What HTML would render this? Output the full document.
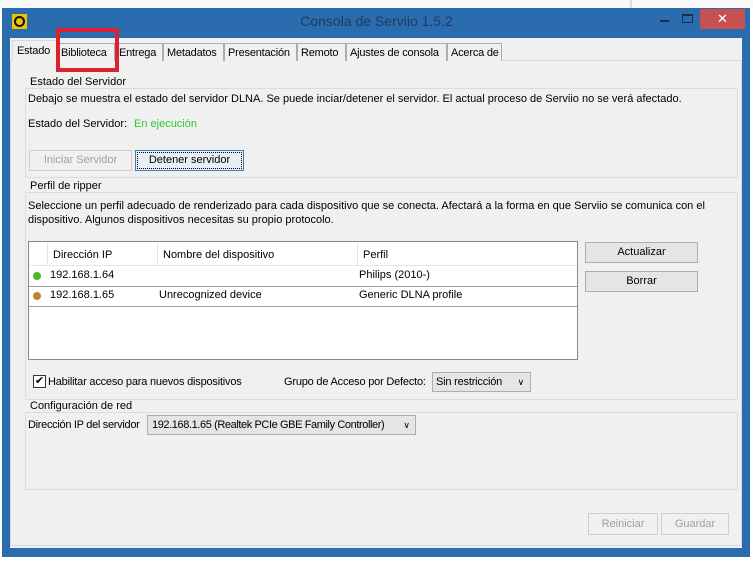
<!DOCTYPE html>
<html><head><meta charset="utf-8"><style>
*{margin:0;padding:0;box-sizing:border-box}
body{width:753px;height:561px;background:#fff;position:relative;overflow:hidden;font-family:"Liberation Sans",sans-serif;font-size:11px;color:#000}
.a{position:absolute;white-space:nowrap}
.frame{position:absolute;left:2px;top:8px;width:748px;height:549px;background:#2b6cae}
.tab{position:absolute;top:43px;height:18px;background:#f0f0f0;border:1px solid #adadad;border-bottom:none;padding:3px 0 0 3px;font-size:11px;white-space:nowrap;overflow:hidden;letter-spacing:-0.2px}
.grp{position:absolute;border:1px solid #dcdcdc;border-radius:2px}
.lbl{position:absolute;background:#f0f0f0;padding:0 2px;font-size:11px;white-space:nowrap}
.btn{position:absolute;border:1px solid #adadad;background:#e5e5e5;text-align:center;font-size:11px;line-height:19px;white-space:nowrap}
.dis{color:#a0a0a0;background:#f0f0f0;border-color:#cfcfcf}
</style></head><body>
<div class="a" style="left:0;top:0;width:753px;height:8px;background:#fafafa"></div>
<div class="a" style="left:630px;top:0;width:2px;height:8px;background:#ddd"></div>
<div class="frame"></div>
<div class="a" style="left:12px;top:14px;width:15px;height:15px;background:#f2c200"></div>
<div class="a" style="left:14px;top:16px;width:11px;height:11px;border:2.5px solid #111;border-radius:50%"></div>
<div class="a" style="left:0;width:753px;top:13px;text-align:center;font-size:14px;color:#1c3b66">Consola de Serviio 1.5.2</div>
<div class="a" style="left:660px;top:20px;width:9px;height:2px;background:#1c2c44"></div>
<div class="a" style="left:682px;top:14px;width:11px;height:9px;border:1px solid #1c2c44;border-top-width:2px"></div>
<div class="a" style="left:700px;top:9px;width:45px;height:20px;background:#c75050;color:#fff;text-align:center;font-size:13px;line-height:19px">✕</div>
<div class="a" style="left:10px;top:38px;width:732px;height:510px;background:#f0f0f0"></div>
<div class="a" style="left:10px;top:60px;width:732px;height:486px;border:1px solid #d9d9d9;background:#f0f0f0"></div>
<div class="tab" style="left:12px;top:40px;height:21px;width:45px;background:#f0f0f0;border-color:#d9d9d9;padding-top:4px;padding-left:4px">Estado</div>
<div class="tab" style="left:57px;width:58px">Biblioteca</div>
<div class="tab" style="left:115px;width:48px">Entrega</div>
<div class="tab" style="left:163px;width:61px">Metadatos</div>
<div class="tab" style="left:224px;width:73px">Presentación</div>
<div class="tab" style="left:297px;width:49px">Remoto</div>
<div class="tab" style="left:346px;width:101px">Ajustes de consola</div>
<div class="tab" style="left:447px;width:55px">Acerca de</div>
<div class="a" style="left:56px;top:28px;width:63px;height:44px;border:4px solid #d9232e"></div>

<div class="grp" style="left:25px;top:88px;width:713px;height:90px"></div>
<div class="lbl" style="left:28px;top:76px">Estado del Servidor</div>
<div class="a" style="left:28px;top:93px">Debajo se muestra el estado del servidor DLNA. Se puede inciar/detener el servidor. El actual proceso de Serviio no se verá afectado.</div>
<div class="a" style="left:28px;top:118px">Estado del Servidor:</div>
<div class="a" style="left:134px;top:118px;color:#2ec82e">En ejecución</div>
<div class="btn dis" style="left:29px;top:150px;width:103px;height:21px">Iniciar Servidor</div>
<div class="btn" style="left:135px;top:150px;width:109px;height:21px;border:1px solid #3c7fb1;outline:1px dotted #000;outline-offset:-3px;background:#e8eef4">Detener servidor</div>

<div class="grp" style="left:25px;top:192px;width:713px;height:208px"></div>
<div class="lbl" style="left:28px;top:180px">Perfil de ripper</div>
<div class="a" style="left:28px;top:200px">Seleccione un perfil adecuado de renderizado para cada dispositivo que se conecta. Afectará a la forma en que Serviio se comunica con el</div>
<div class="a" style="left:28px;top:214px">dispositivo. Algunos dispositivos necesitas su propio protocolo.</div>
<div class="a" style="left:28px;top:241px;width:550px;height:119px;background:#fff;border:1px solid #828790"></div>
<div class="a" style="left:29px;top:242px;width:548px;height:24px;background:#fff;border-bottom:1px solid #e5e5e5"></div>
<div class="a" style="left:47px;top:243px;width:1px;height:22px;background:#e5e5e5"></div>
<div class="a" style="left:157px;top:243px;width:1px;height:22px;background:#e5e5e5"></div>
<div class="a" style="left:357px;top:243px;width:1px;height:22px;background:#e5e5e5"></div>
<div class="a" style="left:53px;top:249px">Dirección IP</div>
<div class="a" style="left:163px;top:249px">Nombre del dispositivo</div>
<div class="a" style="left:363px;top:249px">Perfil</div>
<div class="a" style="left:33px;top:272px;width:8px;height:8px;border-radius:50%;background:#4cb82c"></div>
<div class="a" style="left:50px;top:269px">192.168.1.64</div>
<div class="a" style="left:359px;top:269px">Philips (2010-)</div>
<div class="a" style="left:29px;top:286px;width:548px;height:1px;background:#a0a0a0"></div>
<div class="a" style="left:33px;top:292px;width:8px;height:8px;border-radius:50%;background:#c0842a"></div>
<div class="a" style="left:50px;top:289px">192.168.1.65</div>
<div class="a" style="left:159px;top:289px">Unrecognized device</div>
<div class="a" style="left:359px;top:289px">Generic DLNA profile</div>
<div class="a" style="left:29px;top:306px;width:548px;height:1px;background:#a0a0a0"></div>
<div class="btn" style="left:585px;top:242px;width:113px;height:21px">Actualizar</div>
<div class="btn" style="left:585px;top:271px;width:113px;height:21px">Borrar</div>
<div class="a" style="left:33px;top:375px;width:13px;height:13px;border:1px solid #333;background:#fff;font-size:11px;line-height:11px;text-align:center">✔</div>
<div class="a" style="left:48px;top:376px;letter-spacing:-0.2px">Habilitar acceso para nuevos dispositivos</div>
<div class="a" style="left:284px;top:376px;letter-spacing:-0.2px">Grupo de Acceso por Defecto:</div>
<div class="a" style="left:432px;top:372px;width:99px;height:20px;border:1px solid #adadad;background:#e5e5e5;padding:3px 3px;letter-spacing:-0.2px">Sin restricción<span style="position:absolute;right:6px;top:4px;font-size:9px">&#8744;</span></div>

<div class="grp" style="left:25px;top:412px;width:713px;height:78px"></div>
<div class="lbl" style="left:28px;top:400px">Configuración de red</div>
<div class="a" style="left:28px;top:419px;letter-spacing:-0.3px">Dirección IP del servidor</div>
<div class="a" style="left:147px;top:415px;width:269px;height:20px;border:1px solid #adadad;background:#e5e5e5;padding:3px 4px;letter-spacing:-0.4px">192.168.1.65 (Realtek PCIe GBE Family Controller)<span style="position:absolute;right:5px;top:4px;font-size:9px;letter-spacing:0">&#8744;</span></div>

<div class="btn dis" style="left:588px;top:513px;width:70px;height:22px;line-height:20px">Reiniciar</div>
<div class="btn dis" style="left:661px;top:513px;width:68px;height:22px;line-height:20px">Guardar</div>
</body></html>
